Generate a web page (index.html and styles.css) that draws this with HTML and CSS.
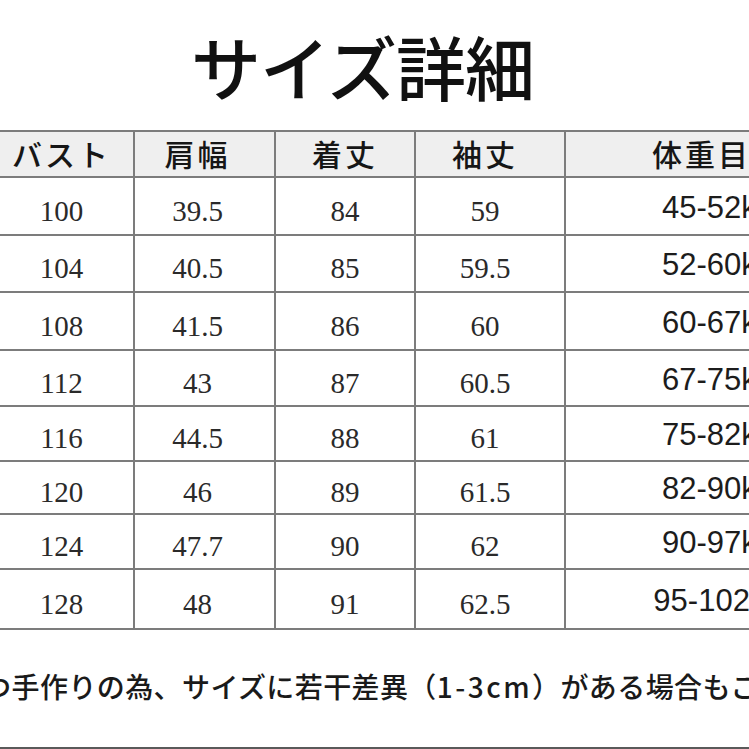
FILE: index.html
```html
<!DOCTYPE html>
<html lang="ja">
<head>
<meta charset="utf-8">
<title>サイズ詳細</title>
<link rel="stylesheet" href="styles.css">
</head>
<body>
<div class="page">
  <header class="title-wrap">
    <h1 class="title">サイズ詳細</h1>
  </header>
  <table class="size-table">
    <colgroup>
      <col class="c1"><col class="c2"><col class="c3"><col class="c4"><col class="c5">
    </colgroup>
    <thead>
      <tr>
        <th>バスト</th><th class="p2">肩幅</th><th>着丈</th><th class="p4">袖丈</th><th>体重目安</th>
      </tr>
    </thead>
    <tbody>
      <tr><td>100</td><td class="p2">39.5</td><td>84</td><td class="p4">59</td><td class="kg">45-52kg</td></tr>
      <tr><td>104</td><td class="p2">40.5</td><td>85</td><td class="p4">59.5</td><td class="kg">52-60kg</td></tr>
      <tr><td>108</td><td class="p2">41.5</td><td>86</td><td class="p4">60</td><td class="kg">60-67kg</td></tr>
      <tr><td>112</td><td class="p2">43</td><td>87</td><td class="p4">60.5</td><td class="kg">67-75kg</td></tr>
      <tr><td>116</td><td class="p2">44.5</td><td>88</td><td class="p4">61</td><td class="kg">75-82kg</td></tr>
      <tr><td>120</td><td class="p2">46</td><td>89</td><td class="p4">61.5</td><td class="kg">82-90kg</td></tr>
      <tr><td>124</td><td class="p2">47.7</td><td>90</td><td class="p4">62</td><td class="kg">90-97kg</td></tr>
      <tr><td>128</td><td class="p2">48</td><td>91</td><td class="p4">62.5</td><td class="kg">95-102kg</td></tr>
    </tbody>
  </table>
  <p class="note">一つ一つ手作りの為、サイズに若干差異（<span class="cm">1-3cm</span>）がある場合もございます。</p>
  <div class="bottom-rule"></div>
</div>
</body>
</html>
```
FILE: styles.css
```css
html, body {
  margin: 0;
  padding: 0;
  background: #ffffff;
}
body {
  width: 749px;
  height: 749px;
  overflow: hidden;
}
.page {
  width: 749px;
  height: 749px;
  display: flex;
  flex-direction: column;
  overflow: hidden;
  color: #1a1a1a;
}
.title-wrap {
  height: 130px;
  display: flex;
  justify-content: center;
  padding-right: 24px;
  box-sizing: border-box;
}
.title {
  margin: 31px 0 0 0;
  font-family: "Noto Sans CJK JP", "Noto Sans", sans-serif;
  font-weight: 500;
  font-size: 70px;
  line-height: 70px;
  letter-spacing: -1px;
  color: #111;
  white-space: nowrap;
}
.size-table {
  border-collapse: collapse;
  table-layout: fixed;
  width: 882px;
  margin-left: -12px;
  flex: none;
}
.c1 { width: 145px; }
.c2 { width: 141px; }
.c3 { width: 140px; }
.c4 { width: 150px; }
.c5 { width: 306px; }
.size-table th,
.size-table td {
  border: 2px solid #7c7c7c;
  text-align: center;
  padding: 0;
  white-space: nowrap;
}
.size-table th {
  height: 46px;
  background: #efefef;
  font-family: "Noto Sans CJK JP", "Noto Sans", sans-serif;
  font-weight: 500;
  font-size: 30px;
  letter-spacing: 3px;
  line-height: 36px;
  color: #161616;
  padding: 0 0 3px 0;
  box-sizing: border-box;
}
.size-table td {
  box-sizing: border-box;
  font-family: "Liberation Serif", "DejaVu Serif", serif;
  font-size: 29px;
  line-height: 34px;
  color: #2a2a2a;
  padding-top: 9px;
}
.size-table tbody tr { height: 56px; }
.size-table tbody tr:nth-child(1) { height: 58px; }
.size-table tbody tr:nth-child(2) { height: 57px; }
.size-table tbody tr:nth-child(3) { height: 58px; }
.size-table tbody tr:nth-child(4) { height: 56px; }
.size-table tbody tr:nth-child(5) { height: 55px; }
.size-table tbody tr:nth-child(6) { height: 53px; }
.size-table tbody tr:nth-child(7) { height: 55px; }
.size-table tbody tr:nth-child(8) { height: 60px; }
.size-table th.p2,
.size-table td.p2 { padding-right: 14px; }
.size-table th.p4,
.size-table td.p4 { padding-right: 10px; }
.size-table td.kg {
  font-family: "Liberation Sans", Arial, sans-serif;
  font-size: 31px;
  color: #1c1c1c;
  padding-top: 3px;
}
.note {
  margin: 41px 0 0 -102px;
  font-family: "Noto Sans CJK JP", "Noto Sans", sans-serif;
  font-weight: 500;
  font-size: 28px;
  letter-spacing: 0.4px;
  line-height: 30px;
  white-space: nowrap;
  color: #1a1a1a;
}
.note .cm {
  letter-spacing: 2.5px;
}
.bottom-rule {
  margin-top: auto;
  height: 2px;
  background: #5a5a5a;
  flex: none;
}
```
